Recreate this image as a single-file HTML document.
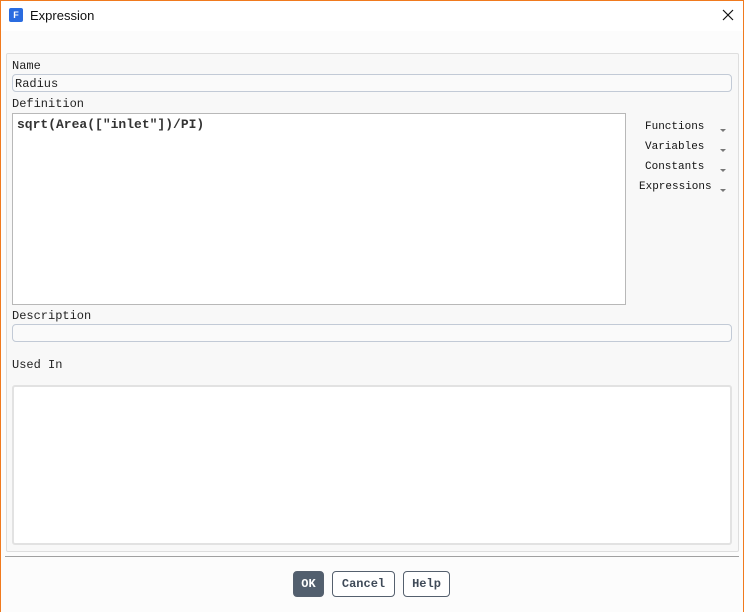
<!DOCTYPE html>
<html><head><style>
*{box-sizing:border-box;margin:0;padding:0}
body{width:744px;height:612px;position:relative;overflow:hidden;background:#fcfcfc;font-family:"Liberation Mono","Noto Sans CJK SC",monospace;font-size:12px;color:#222}
.win{position:absolute;left:0;top:0;width:744px;height:612px;border:1px solid #f07a1e;border-bottom:none}
.title{position:absolute;left:1px;top:1px;width:742px;height:30px;background:#fff}
.abs{position:absolute}
.panel{left:6px;top:53px;width:733px;height:499px;border:1px solid #dedede;background:#f8f8f8;border-radius:2px}
.inp{background:#fafafa;border:1px solid #c2cad6;border-radius:4px}
.lbl{font-size:12px;line-height:14px}
.menu{font-size:11px;line-height:14px;color:#111}
.arr{position:absolute;width:0;height:0;border-left:3px solid transparent;border-right:3px solid transparent;border-top:3px solid #777}
.btn{position:absolute;top:571px;height:26px;border:1px solid #55606e;border-radius:4px;font-weight:bold;font-size:12px;text-align:center;line-height:24px;color:#3f4a58;background:#fff}
</style></head><body>
<div class="win"></div>
<div class="title"></div>
<div class="abs" style="left:9px;top:8px;width:14px;height:14px;background:#2a6ce0;border-radius:2px;color:#fff;font-family:'Liberation Sans',sans-serif;font-weight:bold;font-size:9px;line-height:14px;text-align:center">F</div>
<div class="abs" style="left:30px;top:8px;font-family:'Liberation Sans',sans-serif;font-size:13px;color:#111">Expression</div>
<svg class="abs" style="left:722px;top:9px" width="12" height="12"><path d="M1 1L11 11M11 1L1 11" stroke="#111" stroke-width="1.2"/></svg>
<div class="abs panel"></div>
<div class="abs lbl" style="left:12px;top:59px">Name</div>
<div class="abs inp" style="left:12px;top:74px;width:720px;height:18px"></div>
<div class="abs lbl" style="left:15px;top:77px">Radius</div>
<div class="abs lbl" style="left:12px;top:97px">Definition</div>
<div class="abs" style="left:12px;top:113px;width:614px;height:192px;background:#fff;border:1px solid #b8b8b8"></div>
<div class="abs" style="left:17px;top:117px;font-weight:bold;font-size:13px;color:#333">sqrt(Area(["inlet"])/PI)</div>
<div class="abs menu" style="left:645px;top:120px">Functions</div>
<div class="abs menu" style="left:645px;top:140px">Variables</div>
<div class="abs menu" style="left:645px;top:160px">Constants</div>
<div class="abs menu" style="left:639px;top:180px">Expressions</div>
<div class="arr" style="left:720px;top:129px"></div>
<div class="arr" style="left:720px;top:149px"></div>
<div class="arr" style="left:720px;top:169px"></div>
<div class="arr" style="left:720px;top:189px"></div>
<div class="abs lbl" style="left:12px;top:309px">Description</div>
<div class="abs inp" style="left:12px;top:324px;width:720px;height:18px"></div>
<div class="abs lbl" style="left:12px;top:358px">Used In</div>
<div class="abs" style="left:12px;top:385px;width:720px;height:160px;background:#fff;border:2px solid #e2e2e2;border-radius:3px"></div>
<div class="abs" style="left:5px;top:556px;width:734px;height:1px;background:#a0a0a0"></div>
<div class="btn" style="left:293px;width:31px;background:#525f6e;color:#fff">OK</div>
<div class="btn" style="left:332px;width:63px">Cancel</div>
<div class="btn" style="left:403px;width:47px">Help</div>
</body></html>
